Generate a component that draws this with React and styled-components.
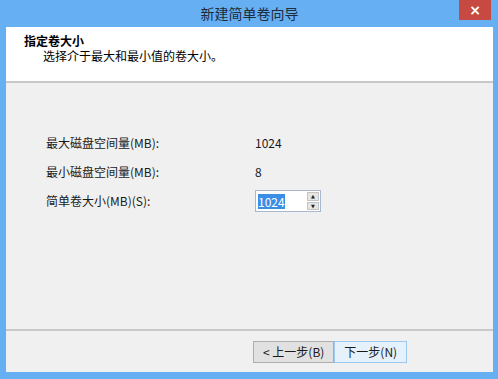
import React from 'react';
import styled, { createGlobalStyle } from 'styled-components';

const Global = createGlobalStyle`
  html, body { margin: 0; padding: 0; background: #fff; }
  body { font-family: "Noto Sans CJK SC", "Noto Sans", sans-serif; }
`;

function App() {
  return (
    <>
      <Global />
      <Window>
        <TitleBar>
          <Title>新建简单卷向导</Title>
          <CloseButton>×</CloseButton>
        </TitleBar>
        <Client>
          <Header>
            <HeaderTitle>指定卷大小</HeaderTitle>
            <HeaderSub>选择介于最大和最小值的卷大小。</HeaderSub>
          </Header>
          <Body>
            <Row>
              <Label>最大磁盘空间量(MB):</Label>
              <Value>1024</Value>
            </Row>
            <Row>
              <Label>最小磁盘空间量(MB):</Label>
              <Value>8</Value>
            </Row>
            <Row>
              <Label>简单卷大小(MB)(S):</Label>
              <Spinner>
                <SpinText><Selected>1024</Selected></SpinText>
                <SpinButtons>
                  <SpinBtn>▲</SpinBtn>
                  <SpinBtn>▼</SpinBtn>
                </SpinButtons>
              </Spinner>
            </Row>
          </Body>
          <Footer>
            <Button>&lt; 上一步(B)</Button>
            <Button $primary>下一步(N)</Button>
          </Footer>
        </Client>
      </Window>
    </>
  );
}

export default App;

const Window = styled.div`
  width: 498px;
  height: 379px;
  box-sizing: border-box;
  background: #66aff2;
  padding: 0 5px 7px 6px;
  display: flex;
  flex-direction: column;
`;

const TitleBar = styled.div`
  height: 27px;
  display: flex;
  align-items: center;
  justify-content: center;
  position: relative;
`;

const Title = styled.div`
  font-size: 14px;
  color: #1e2b3a;
  margin-top: -2px;
`;

const CloseButton = styled.div`
  position: absolute;
  right: 2px;
  top: 0;
  width: 32px;
  height: 20px;
  background: #c74a42;
  color: #fff;
  font-family: "DejaVu Sans", sans-serif;
  font-size: 14px;
  font-weight: bold;
  display: flex;
  align-items: center;
  justify-content: center;
`;

const Client = styled.div`
  flex: 1;
  display: flex;
  flex-direction: column;
  background: #f0f0f0;
`;

const Header = styled.div`
  height: 56px;
  background: #fff;
  border-bottom: 2px solid #c8c8c8;
  padding: 6px 0 0 18px;
  box-sizing: border-box;
`;

const HeaderTitle = styled.div`
  font-size: 12px;
  font-weight: bold;
  color: #000;
  line-height: 15px;
`;

const HeaderSub = styled.div`
  font-size: 12px;
  color: #000;
  line-height: 15px;
  padding-left: 19px;
`;

const Body = styled.div`
  flex: 1;
  padding: 50px 0 0 40px;
  display: flex;
  flex-direction: column;
  gap: 11px;
  border-bottom: 2px solid #c8c8c8;
`;

const Row = styled.div`
  display: flex;
  align-items: center;
  height: 18px;
`;

const Label = styled.div`
  width: 209px;
  font-size: 12px;
  color: #1a1a1a;
`;

const Value = styled.div`
  font-size: 12px;
  color: #1a1a1a;
`;

const Spinner = styled.div`
  display: flex;
  width: 66px;
  height: 22px;
  box-sizing: border-box;
  border: 1px solid #a8b8cc;
  background: #fff;
  margin-top: 2px;
`;

const SpinText = styled.div`
  flex: 1;
  display: flex;
  align-items: center;
  padding-left: 2px;
  font-size: 12px;
`;

const Selected = styled.span`
  background: #3a8ee6;
  color: #fff;
  line-height: 15px;
`;

const SpinButtons = styled.div`
  width: 12px;
  display: flex;
  flex-direction: column;
  gap: 1px;
  padding: 1px 1px 1px 0;
`;

const SpinBtn = styled.div`
  flex: 1;
  background: #e6e6e6;
  border: 1px solid #c4c4c4;
  font-family: "DejaVu Sans", sans-serif;
  font-size: 5px;
  display: flex;
  align-items: center;
  justify-content: center;
  color: #222;
`;

const Footer = styled.div`
  height: 41px;
  display: flex;
  align-items: center;
  padding-left: 247px;
  box-sizing: border-box;
`;

const Button = styled.div`
  height: 22px;
  box-sizing: border-box;
  padding: 0 9px;
  display: flex;
  align-items: center;
  font-size: 12px;
  color: #1a1a1a;
  background: ${p => (p.$primary ? '#e5f1fb' : '#e1e1e1')};
  border: 1px solid ${p => (p.$primary ? '#9cc8ef' : '#adadad')};
  min-width: ${p => (p.$primary ? '61px' : '73px')};
  justify-content: center;
`;
